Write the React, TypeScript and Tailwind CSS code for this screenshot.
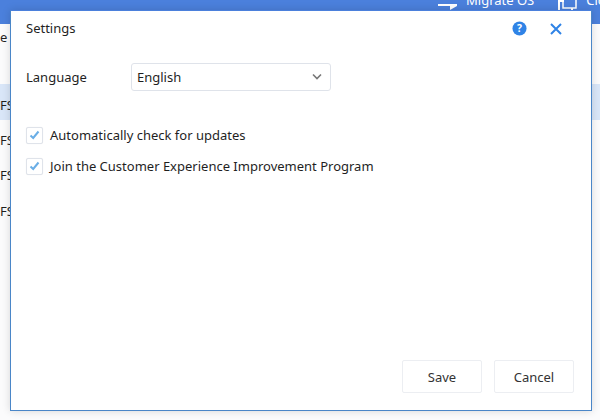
import React from "react";

const Check = () => (
  <span className="w-[17px] h-[17px] border border-[#dfe3ea] rounded-[2px] bg-white flex items-center justify-center shrink-0 shadow-[0_0_1px_rgba(0,0,0,0.08)]">
    <svg width="11" height="10" viewBox="0 0 11 10" fill="none" stroke="#6aaee6" strokeWidth="2">
      <path d="M1.5 5.5 L4.2 8 L9.5 1.5" />
    </svg>
  </span>
);

export default function App() {
  return (
    <div className="relative w-[600px] h-[420px] overflow-hidden bg-[#fbfbfc] text-[13px] text-[#1f1f1f]" style={{ fontFamily: '"Noto Sans", "Open Sans", sans-serif' }}>
      <div className="h-[24px] bg-[#4b80dc] flex items-start text-white pl-[438px]">
        <svg className="shrink-0" width="20" height="10" viewBox="0 0 20 10" fill="#fff">
          <path d="M0 4 H19 V6 H19 L19 6 L12 10 V6 H0 Z" />
        </svg>
        <span className="ml-[8px] -mt-[9px] whitespace-nowrap">Migrate OS</span>
        <svg className="ml-[24px] shrink-0" width="20" height="12" viewBox="0 0 20 12" fill="none" stroke="#fff" strokeWidth="2">
          <path d="M5 -2 V2 M5 1 H1 V11 H14 V8" />
          <path d="M18 -2 V8 H5 V0" strokeWidth="1.5" />
        </svg>
        <span className="ml-[8px] -mt-[9px] whitespace-nowrap">Clone</span>
      </div>
      <div className="h-[60px]" />
      <div className="h-[36px] bg-[#d9e6f8]" />
      <div className="absolute left-0 top-[96px]">FS</div>
      <div className="absolute left-0 top-[131px]">FS</div>
      <div className="absolute left-0 top-[166px]">FS</div>
      <div className="absolute left-0 top-[202px]">FS</div>
      <div className="absolute left-0 top-[28px]">e</div>
      <div className="absolute left-[10px] top-[10px] w-[582px] h-[401px] bg-white border border-[#4a86c8] border-t-[#4b80dc] flex flex-col shadow-[0_0_8px_rgba(0,0,0,0.15)]">
        <div className="flex items-center h-[35px] pl-[15px] pr-[29px]">
          <span className="flex-1">Settings</span>
          <svg className="mr-[23px]" width="15" height="15" viewBox="0 0 16 16">
            <circle cx="8" cy="8" r="7.5" fill="#2f83e6" />
            <text x="8" y="12" fontSize="11" fontWeight="700" textAnchor="middle" fill="#fff" fontFamily="Noto Sans">?</text>
          </svg>
          <svg width="12" height="12" viewBox="0 0 12 12" stroke="#2f83e6" strokeWidth="2" fill="none">
            <path d="M1 1 L11 11 M11 1 L1 11" />
          </svg>
        </div>
        <div className="flex items-center mt-[17px] pl-[15px]">
          <span className="w-[105px] pt-[2px]">Language</span>
          <div className="w-[200px] h-[28px] border border-[#dfe3ea] rounded-[3px] flex items-center justify-between pl-[5px] pr-[8px]">
            <span className="pt-[2px]">English</span>
            <svg width="10" height="8" viewBox="0 0 10 8" fill="none" stroke="#777" strokeWidth="1.6"><path d="M1 1.5 L5 5.5 L9 1.5" /></svg>
          </div>
        </div>
        <div className="flex flex-col gap-[11px] mt-[34px] pl-[15px]">
          <label className="flex items-center gap-[7px] h-[20px]"><Check /><span className="pt-[2px]">Automatically check for updates</span></label>
          <label className="flex items-center gap-[7px] h-[20px]"><Check /><span className="pt-[2px]">Join the Customer Experience Improvement Program</span></label>
        </div>
        <div className="mt-auto flex justify-end gap-[12px] pr-[17px] pb-[17px]">
          <button className="w-[80px] h-[33px] pt-[2px] border border-[#eceef2] rounded-[2px] text-[#333]">Save</button>
          <button className="w-[80px] h-[33px] pt-[2px] border border-[#eceef2] rounded-[2px] text-[#333]">Cancel</button>
        </div>
      </div>
    </div>
  );
}
